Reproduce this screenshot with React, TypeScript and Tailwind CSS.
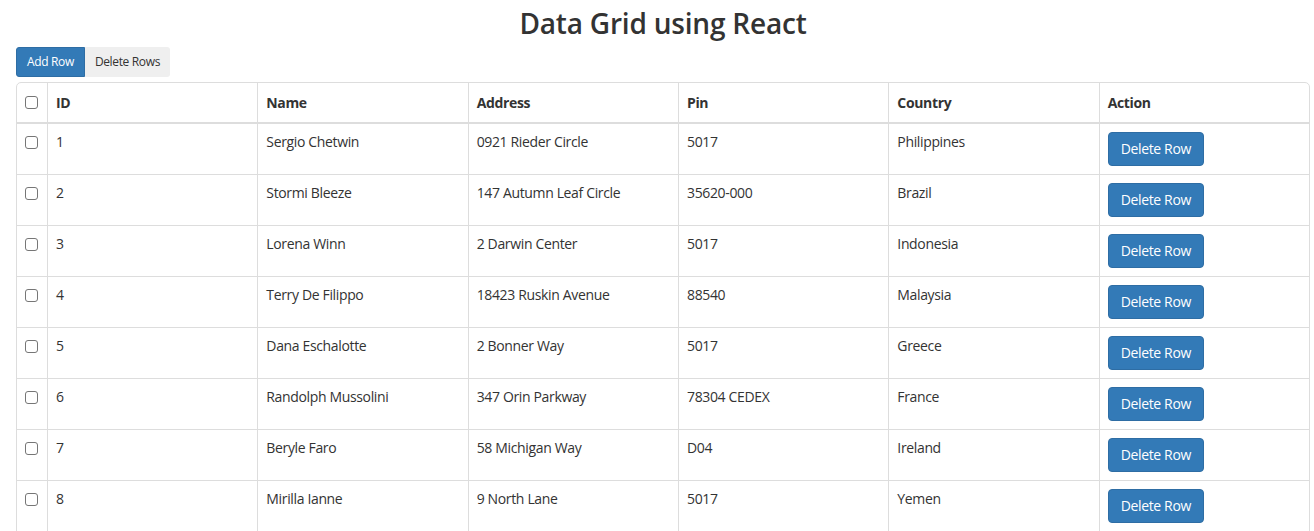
import { useState } from 'react';

type Person = { id: number; name: string; address: string; pin: string; country: string };

const initialRows: Person[] = [
  { id: 1, name: 'Sergio Chetwin', address: '0921 Rieder Circle', pin: '5017', country: 'Philippines' },
  { id: 2, name: 'Stormi Bleeze', address: '147 Autumn Leaf Circle', pin: '35620-000', country: 'Brazil' },
  { id: 3, name: 'Lorena Winn', address: '2 Darwin Center', pin: '5017', country: 'Indonesia' },
  { id: 4, name: 'Terry De Filippo', address: '18423 Ruskin Avenue', pin: '88540', country: 'Malaysia' },
  { id: 5, name: 'Dana Eschalotte', address: '2 Bonner Way', pin: '5017', country: 'Greece' },
  { id: 6, name: 'Randolph Mussolini', address: '347 Orin Parkway', pin: '78304 CEDEX', country: 'France' },
  { id: 7, name: 'Beryle Faro', address: '58 Michigan Way', pin: 'D04', country: 'Ireland' },
  { id: 8, name: 'Mirilla Ianne', address: '9 North Lane', pin: '5017', country: 'Yemen' },
];

const cols = ['ID', 'Name', 'Address', 'Pin', 'Country', 'Action'];

function Check({ checked, onChange }: { checked: boolean; onChange: () => void }) {
  return (
    <input
      type="checkbox"
      checked={checked}
      onChange={onChange}
      className="appearance-none w-[13px] h-[13px] rounded-[3px] border border-[#767676] bg-white checked:bg-[#0075ff] checked:border-[#0075ff] block"
    />
  );
}

export default function App() {
  const [rows, setRows] = useState(initialRows);
  const [selected, setSelected] = useState<number[]>([]);

  const toggle = (id: number) =>
    setSelected((s) => (s.includes(id) ? s.filter((x) => x !== id) : [...s, id]));

  const addRow = () => {
    const id = rows.length ? Math.max(...rows.map((r) => r.id)) + 1 : 1;
    setRows([...rows, { id, name: '', address: '', pin: '', country: '' }]);
  };

  return (
    <div className="pl-4 pr-1 text-[#333] font-['Segoe_UI','Open_Sans',sans-serif] text-[14px] tracking-[-0.35px]">
      {/* Title */}
      <h1 className="text-center text-[28px] font-semibold leading-[44px] h-[47px] pt-[1px] tracking-[-0.2px]">
        Data Grid using React
      </h1>

      {/* Button group */}
      <div className="flex h-[30px]">
        <button
          onClick={addRow}
          className="h-[30px] px-[10px] text-[12px] text-white bg-[#337ab7] border border-[#2e6da4] rounded-l-[3px]"
        >
          Add Row
        </button>
        <button
          onClick={() => {
            setRows(rows.filter((r) => !selected.includes(r.id)));
            setSelected([]);
          }}
          className="h-[30px] px-[10px] text-[12px] text-[#333] bg-[#efefef] rounded-r-[3px]"
        >
          Delete Rows
        </button>
      </div>

      {/* Grid */}
      <div className="mt-[5px] border border-[#ddd] rounded-t-[5px]">
        <div className="grid grid-cols-[30px_repeat(6,1fr)] h-[41px] border-b-2 border-[#ddd] font-bold">
          <div className="flex items-center pl-2">
            <Check
              checked={rows.length > 0 && selected.length === rows.length}
              onChange={() => setSelected(selected.length === rows.length ? [] : rows.map((r) => r.id))}
            />
          </div>
          {cols.map((c) => (
            <div key={c} className="border-l border-[#ddd] px-2 flex items-center">
              {c}
            </div>
          ))}
        </div>
        {rows.map((r) => (
          <div key={r.id} className="grid grid-cols-[30px_repeat(6,1fr)] h-[51px] border-b border-[#ddd]">
            <div className="pl-2 pt-[12px]">
              <Check checked={selected.includes(r.id)} onChange={() => toggle(r.id)} />
            </div>
            <div className="border-l border-[#ddd] px-2 pt-[8px] leading-5">{r.id}</div>
            <div className="border-l border-[#ddd] px-2 pt-[8px] leading-5">{r.name}</div>
            <div className="border-l border-[#ddd] px-2 pt-[8px] leading-5">{r.address}</div>
            <div className="border-l border-[#ddd] px-2 pt-[8px] leading-5">{r.pin}</div>
            <div className="border-l border-[#ddd] px-2 pt-[8px] leading-5">{r.country}</div>
            <div className="border-l border-[#ddd] px-2 pt-[8px]">
              <button
                onClick={() => setRows(rows.filter((x) => x.id !== r.id))}
                className="h-[34px] px-3 leading-5 text-white bg-[#337ab7] border border-[#2e6da4] rounded"
              >
                Delete Row
              </button>
            </div>
          </div>
        ))}
      </div>
    </div>
  );
}
